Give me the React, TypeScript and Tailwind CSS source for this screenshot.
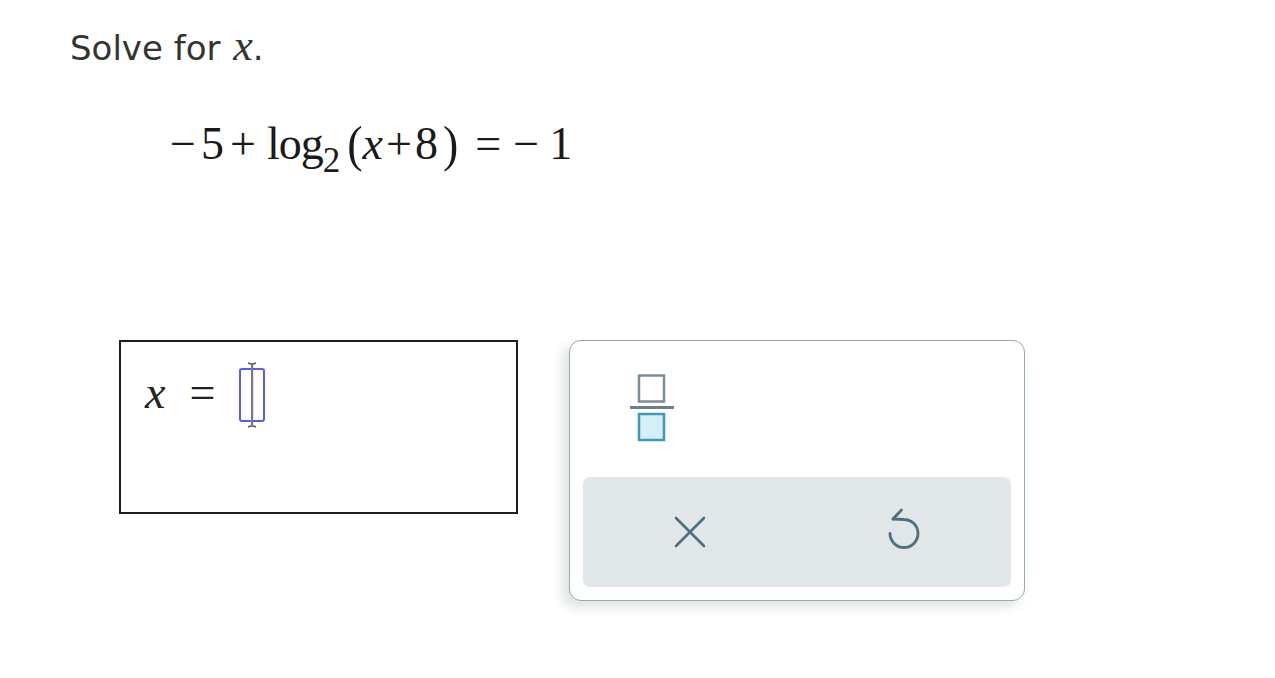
import React from "react";

const serif = { fontFamily: '"Liberation Serif", "Times New Roman", serif' };

function FractionIcon() {
  return (
    <svg width="44" height="68" viewBox="0 0 44 68" fill="none">
      <rect x="9" y="1.5" width="25" height="26" stroke="#7b8d96" strokeWidth="2.5" fill="#fff" />
      <rect x="0" y="32" width="44" height="3" fill="#6c7f88" />
      <rect x="9" y="40" width="25" height="26" stroke="#3b9bbd" strokeWidth="2.5" fill="#d6eef5" />
    </svg>
  );
}

function CloseIcon() {
  return (
    <svg width="34" height="34" viewBox="0 0 34 34" fill="none">
      <path d="M3 3 L31 31 M31 3 L3 31" stroke="#4f6f7d" strokeWidth="2.6" strokeLinecap="round" />
    </svg>
  );
}

function UndoIcon() {
  return (
    <svg width="36" height="44" viewBox="0 0 36 44" fill="none">
      <path
        d="M7 12 L18 12.5 A14 14 0 1 1 4 26.5"
        stroke="#4f6f7d"
        strokeWidth="2.8"
        strokeLinecap="round"
        strokeLinejoin="round"
      />
      <path d="M15.5 3 L7 12" stroke="#4f6f7d" strokeWidth="2.8" strokeLinecap="round" />
    </svg>
  );
}

function Cursor() {
  return (
    <svg width="12" height="66" viewBox="0 0 12 66" className="absolute left-1/2 top-1/2 -translate-x-1/2 -translate-y-1/2">
      <path d="M2 1 Q6 3 10 1 M2 65 Q6 63 10 65" stroke="#555" strokeWidth="1.5" fill="none" />
      <rect x="5" y="2" width="2.2" height="62" fill="#7a7a7a" />
    </svg>
  );
}

export default function App() {
  return (
    <div className="min-h-screen bg-white text-[#222]">
      <div className="pl-[70px] pt-[24px]">
        <div className="text-[34px] leading-[42px] text-[#333]" style={{ fontFamily: '"DejaVu Sans", Verdana, sans-serif' }}>
          Solve for{" "}
          <span className="italic text-[44px] leading-none ml-[2px]" style={serif}>
            x
          </span>
          .
        </div>

        <div className="mt-[47px] ml-[100px] flex items-baseline text-[46px] leading-[56px] text-[#1a1a1a]" style={serif}>
          <span>−</span>
          <span className="ml-[5px]">5</span>
          <span className="ml-[6px]">+</span>
          <span className="ml-[11px] tracking-[-1px]">log</span>
          <span className="relative top-[13px] text-[35px] leading-none">2</span>
          <span className="ml-[7px] inline-block scale-y-[1.12]">(</span>
          <span className="italic">x</span>
          <span className="ml-[3px]">+</span>
          <span className="ml-[3px]">8</span>
          <span className="ml-[5px] inline-block scale-y-[1.12]">)</span>
          <span className="ml-[17px]">=</span>
          <span className="ml-[12px]">−</span>
          <span className="ml-[10px]">1</span>
        </div>
      </div>

      <div className="mt-[168px] ml-[119px] flex items-start gap-[51px]">
        <div className="w-[399px] h-[174px] border-2 border-[#1e1e1e] pl-[24px] pt-[22px]">
          <div className="flex items-center text-[46px] leading-none" style={serif}>
            <span className="italic">x</span>
            <span className="ml-[24px]">=</span>
            <span className="relative ml-[24px] mt-[4px] w-[26px] h-[54px] border-2 border-[#5a5af2] rounded-[3px]">
              <Cursor />
            </span>
          </div>
        </div>

        <div className="w-[456px] h-[261px] rounded-[12px] border-[1.5px] border-[#98aab3] bg-white shadow-[-7px_6px_12px_rgba(60,80,90,0.16)] flex flex-col px-[13px] pb-[13px]">
          <div className="h-[136px] pl-[47px] pt-[33px]">
            <FractionIcon />
          </div>
          <div className="flex-1 rounded-[7px] bg-[#e1e6e9] flex items-center">
            <div className="w-[214px] flex justify-center">
              <CloseIcon />
            </div>
            <div className="w-[214px] flex justify-center pb-[6px]">
              <UndoIcon />
            </div>
          </div>
        </div>
      </div>
    </div>
  );
}
